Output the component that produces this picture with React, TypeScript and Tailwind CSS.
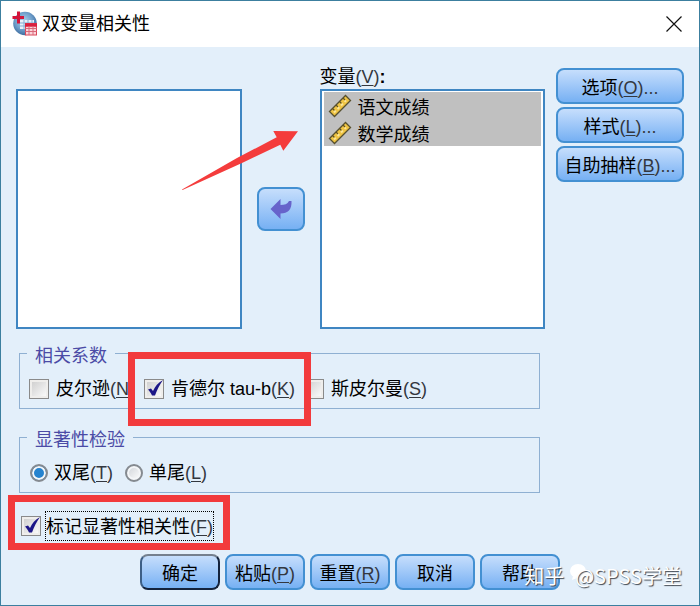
import React, { useState } from 'react';
import clsx from 'clsx';

const VARIABLES = ['语文成绩', '数学成绩'];

const AppIcon: React.FC = () => (
  <svg width="26" height="26" viewBox="0 0 26 26" aria-hidden="true">
    <defs>
      <radialGradient id="globe" cx="45%" cy="40%" r="60%">
        <stop offset="0" stopColor="#b4d2ec" />
        <stop offset="0.6" stopColor="#6f9fcb" />
        <stop offset="1" stopColor="#3d6c9f" />
      </radialGradient>
    </defs>
    <circle cx="13" cy="12.5" r="11.8" fill="url(#globe)" />
    <path d="M8 9h14v9H8z" fill="#e6f0fa" />
    <path d="M8 12h14M8 15h14M12 9v9M16 9v9M20 9v9" stroke="#85add3" strokeWidth="1" />
    <path d="M0.500 6.500H12M6.500 0.500v12" stroke="#d3143a" strokeWidth="3" />
    <rect x="13.5" y="12.5" width="11" height="11.5" fill="#fbd5da" stroke="#d9485a" strokeWidth="1" />
    <path d="M13 14h12" stroke="#d9203f" strokeWidth="3.500" />
    <path d="M13.500 17.500h11M13.500 20.500h11M17 15v9M21 15v9" stroke="#d9687a" strokeWidth="1" />
  </svg>
);

const RulerIcon: React.FC = () => (
  <svg width="24" height="24" viewBox="0 0 24 24" aria-hidden="true">
    <path d="M1.500 17.500 17.500 1.500 22.500 6.500 6.500 22.500z" fill="#efc443" stroke="#57502f" strokeWidth="1.300" />
    <path d="m4.500 14.500 2 2M8 11l2 2M11.500 7.500l2 2M15 4l2 2" stroke="#5d5128" strokeWidth="1.200" />
    <path d="m6 18.500 12-12" stroke="#fbe69a" strokeWidth="2" strokeDasharray="2.500 2.500" />
  </svg>
);

const MoveArrowIcon: React.FC = () => (
  <svg width="22" height="22" viewBox="0 0 22 22" aria-hidden="true">
    <path d="M0.500 11 10.500 1V7C14.500 7 17.500 6 19 3H21.500C22 11.500 18 15.500 10.500 15.500V21z" fill="#6763cb" />
  </svg>
);

const Mnemonic: React.FC<{ char: string }> = ({ char }) => (
  <span className="text-[#33373f]">(<u className="underline-offset-2">{char}</u>)</span>
);

interface DialogButtonProps {
  text: string;
  char?: string;
  more?: boolean;
  primary?: boolean;
  className?: string;
}

const DialogButton: React.FC<DialogButtonProps> = ({ text, char, more, primary, className }) => (
  <button
    type="button"
    className={clsx(
      'h-9 pt-1 rounded-lg border-2 bg-linear-to-b from-[#c6defc] to-[#76b0f3] whitespace-nowrap',
      primary ? 'border-[#14233c] border-t-[#75808e] border-l-[#3d5f86]' : 'border-[#4390d2]',
      className,
    )}
  >
    {text}
    {char && <Mnemonic char={char} />}
    {more && <span className="text-[#33373f]">...</span>}
  </button>
);

interface CheckProps {
  id: string;
  text: string;
  char: string;
  checked: boolean;
  onToggle: (id: string) => void;
  labelClass?: string;
}

const Check: React.FC<CheckProps> = ({ id, text, char, checked, onToggle, labelClass }) => (
  <>
    <span className="relative flex shrink-0">
      <input
        id={id}
        type="checkbox"
        checked={checked}
        onChange={() => onToggle(id)}
        className="size-5 appearance-none border border-[#8a8a8a] bg-linear-to-br from-[#cbcbcb] to-white shadow-[inset_0_0_0_2px_#efeeec]"
      />
      {checked && (
        <svg className="absolute inset-0 pointer-events-none" width="20" height="20" viewBox="0 0 20 20" aria-hidden="true">
          <path d="M4 10.500 7 9.500 9 12C11 7.500 14 3.500 19 1 15.500 6 13 11 11 16.500H8C7 14 5.500 12 4 10.500z" fill="#1c1687" />
        </svg>
      )}
    </span>
    <label htmlFor={id} className={clsx('whitespace-nowrap', labelClass)}>
      {text}
      <Mnemonic char={char} />
    </label>
  </>
);

const Group: React.FC<{ title: string; children: React.ReactNode }> = ({ title, children }) => (
  <fieldset className="ml-[3px] mr-36 border border-[#8fb0d2] px-[9px] pb-[7px]">
    <legend className="-ml-[2px] px-2 pt-[6px] leading-[18px] text-[#4b4ba6]">{title}</legend>
    <div className="flex h-6 mt-3 items-center">{children}</div>
  </fieldset>
);

export default function App() {
  const [checks, setChecks] = useState<Record<string, boolean>>({ kendall: true, flag: true });
  const [tail, setTail] = useState('two');

  const toggle = (id: string) => setChecks(prev => ({ ...prev, [id]: !prev[id] }));

  return (
    <div className="min-h-screen flex flex-col border border-[#3c7f9f] bg-[#e3effa] text-black text-[18px] leading-6 font-['Liberation_Sans','Noto_Sans_CJK_SC',sans-serif]">
      <header className="h-[46px] flex items-center gap-1 bg-white pl-[11px] pr-4">
        <AppIcon />
        <h1 className="flex-1">双变量相关性</h1>
        <button type="button" aria-label="关闭" className="p-px">
          <svg width="16" height="16" viewBox="0 0 16 16" aria-hidden="true">
            <path d="M0.500 0.500l15 15M15.500 0.500l-15 15" stroke="#111" strokeWidth="1.200" />
          </svg>
        </button>
      </header>

      <main className="px-[15px] pt-[21px] pb-[14px]">
        <div className="relative flex items-end">
          <div className="flex-1">
            <div className="h-60 border-2 border-[#3f86c2] bg-white" />
          </div>

          <div className="h-60 flex items-center px-[15px]">
            <button
              type="button"
              aria-label="移动"
              className="w-12 h-11 flex items-center justify-center rounded-lg border-2 border-[#4390d2] bg-linear-to-b from-[#c6defc] to-[#76b0f3]"
            >
              <MoveArrowIcon />
            </button>
          </div>

          <div className="flex-1">
            <div className="h-[21px] leading-[18px]">变量<Mnemonic char="V" /><b>:</b></div>
            <ul className="h-60 border-2 border-[#3f86c2] bg-white px-0.5 pt-px">
              {VARIABLES.map(name => (
                <li key={name} className="h-[27px] flex items-center gap-[6px] bg-[#c0c0c0] pl-1 pt-1">
                  <span className="-mt-1"><RulerIcon /></span>
                  {name}
                </li>
              ))}
            </ul>
          </div>

          <div className="self-start w-32 ml-[11px] flex flex-col gap-[3px]">
            <DialogButton text="选项" char="O" more />
            <DialogButton text="样式" char="L" more />
            <DialogButton text="自助抽样" char="B" more />
          </div>

          {/* Arrow pointing at the selected variables */}
          <svg className="absolute left-[166px] top-[62px] pointer-events-none" width="117" height="60" viewBox="0 0 117 60" aria-hidden="true">
            <path d="M0 59.500 55 28 94.700 7.300 91.300 1 116 1.300 101.300 20.700 98.300 14.700 60 33 0.500 60z" fill="#f43c3c" />
          </svg>
        </div>

        <div className="mt-3 flex flex-col gap-4">
          <Group title="相关系数">
            <div className="flex items-center gap-[7px]">
              <Check id="pearson" text="皮尔逊" char="N" checked={!!checks.pearson} onToggle={toggle} />
            </div>
            <div className="relative z-10 ml-[9px] flex items-center gap-[7px]">
              <Check id="kendall" text="肯德尔 tau-b" char="K" checked={!!checks.kendall} onToggle={toggle} />
              <div className="absolute -inset-x-4 -inset-y-[25px] border-[7px] border-[#f23a3c] pointer-events-none" />
            </div>
            <div className="ml-[9px] flex items-center gap-[7px]">
              <Check id="spearman" text="斯皮尔曼" char="S" checked={!!checks.spearman} onToggle={toggle} />
            </div>
          </Group>

          <Group title="显著性检验">
            {[
              { id: 'two', text: '双尾', char: 'T' },
              { id: 'one', text: '单尾', char: 'L' },
            ].map(({ id, text, char }) => (
              <label key={id} className="mr-[11px] flex items-center gap-[6px] pl-px">
                <span className="relative flex">
                  <input
                    type="radio"
                    name="tail"
                    checked={tail === id}
                    onChange={() => setTail(id)}
                    className="size-[18px] appearance-none rounded-full border-2 border-[#858a90] bg-linear-to-br from-[#cfd3d8] to-white shadow-[inset_0_0_0_2px_#f4f6f8] checked:bg-[#2583cf] checked:bg-none"
                  />
                </span>
                <span>{text}<Mnemonic char={char} /></span>
              </label>
            ))}
          </Group>
        </div>

        <div className="mt-[18px] ml-[5px] flex">
          <div className="relative flex items-center gap-1">
            <Check
              id="flag"
              text="标记显著性相关性"
              char="F"
              checked={!!checks.flag}
              onToggle={toggle}
              labelClass="h-[30px] pt-px leading-[28px] border border-dotted border-black"
            />
            <div className="absolute -left-[13px] -right-4 -top-4 -bottom-[9px] border-[7px] border-[#f23a3c] pointer-events-none" />
          </div>
        </div>

        <div className="relative mt-[13px] flex justify-center gap-[5px]">
          <DialogButton text="确定" primary className="w-20" />
          <DialogButton text="粘贴" char="P" className="w-20" />
          <DialogButton text="重置" char="R" className="w-20" />
          <DialogButton text="取消" className="w-20" />
          <DialogButton text="帮助" className="w-20" />

          {/* Watermark over the button bar */}
          <div className="absolute right-0.5 top-[10px] flex items-center gap-[11px] text-white text-[20px] whitespace-nowrap pointer-events-none font-['Noto_Sans_CJK_SC',sans-serif] [text-shadow:1px_1px_1px_#3f464f]">
            <span>知乎</span>
            <span className="relative">
              <svg className="absolute -left-[6px] -top-px" width="26" height="22" viewBox="0 0 26 22" aria-hidden="true">
                <ellipse cx="9" cy="8" rx="8" ry="7" fill="#fff" />
                <ellipse cx="17" cy="14" rx="7" ry="6" fill="#fff" />
                <path d="M4 13l-1 4 5-2z" fill="#fff" />
              </svg>
              <span className="relative">@SPSS学堂</span>
            </span>
          </div>
        </div>
      </main>
    </div>
  );
}
